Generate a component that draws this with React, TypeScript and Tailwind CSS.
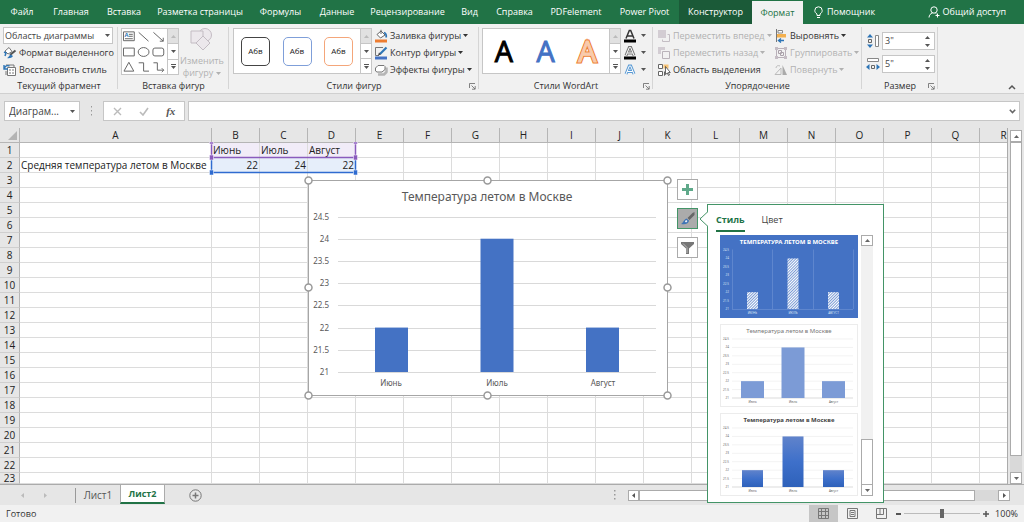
import React, { useState } from "react";
import clsx from "clsx";

const TABS = [
  { label: "Файл", width: "w-[44px]" },
  { label: "Главная", width: "w-[54px]" },
  { label: "Вставка", width: "w-[52px]" },
  { label: "Разметка страницы", width: "w-[100px]" },
  { label: "Формулы", width: "w-[61px]" },
  { label: "Данные", width: "w-[52px]" },
  { label: "Рецензирование", width: "w-[89px]" },
  { label: "Вид", width: "w-[35px]" },
  { label: "Справка", width: "w-[55px]" },
  { label: "PDFelement", width: "w-[68px]" },
  { label: "Power Pivot", width: "w-[69px]" },
];

const COLUMNS = "BCDEFGHIJKLMNOPQR".split("");
const ROWS = Array.from({ length: 23 }, (_, i) => i + 1);

const CELLS: Record<string, string> = {
  A2: "Средняя температура летом в Москве",
  B1: "Июнь",
  C1: "Июль",
  D1: "Август",
  B2: "22",
  C2: "24",
  D2: "22",
};

const DATA = [
  { month: "Июнь", value: 22 },
  { month: "Июль", value: 24 },
  { month: "Август", value: 22 },
];
const TICKS = [24.5, 24, 23.5, 23, 22.5, 22, 21.5, 21];

const Caret = ({ className = "" }: { className?: string }) => (
  <svg className={clsx("shrink-0", className)} width="5" height="3" viewBox="0 0 5 3" fill="currentColor">
    <path d="M0 0h5L2.500 3z" />
  </svg>
);

const Launcher = ({ label }: { label: string }) => (
  <button aria-label={label} className="absolute right-[3px] bottom-[3px] text-[#666]">
    <svg width="7" height="7" viewBox="0 0 7 7" fill="none" stroke="currentColor" strokeWidth="0.8">
      <path d="M0.500 5V0.500H6M2.500 2.500l3.500 3.500M6.200 3v3.200H3" />
    </svg>
  </button>
);

interface GroupProps {
  title: string;
  width: string;
  launcher?: boolean;
  children: React.ReactNode;
}

const Group = ({ title, width, launcher, children }: GroupProps) => (
  <section className={clsx("relative flex shrink-0 flex-col pt-[3px]", width)}>
    <div className="flex h-[52px] shrink-0">{children}</div>
    <h2 className="shrink-0 text-center text-[9px] leading-[14px] text-[#333]">{title}</h2>
    {launcher && <Launcher label={title} />}
    <span className="absolute top-[3px] right-0 h-[62px] w-px bg-[#d5d5d5]" />
  </section>
);

const GalleryScroll = () => (
  <div className="flex w-[11px] flex-col border-l border-[#c6c6c6] text-[#555]">
    <button aria-label="Вверх" className="flex flex-1 items-center justify-center bg-[#e1e1e1] text-[#bbb]">
      <Caret className="rotate-180" />
    </button>
    <button aria-label="Вниз" className="flex flex-1 items-center justify-center border-y border-[#c6c6c6]">
      <Caret />
    </button>
    <button aria-label="Ещё" className="flex flex-1 flex-col items-center justify-center gap-px">
      <span className="h-px w-[5px] bg-current" />
      <Caret />
    </button>
  </div>
);

interface CommandProps {
  label: string;
  icon: React.ReactNode;
  caret?: boolean;
  disabled?: boolean;
}

const Command = ({ label, icon, caret, disabled }: CommandProps) => (
  <button
    disabled={disabled}
    className={clsx(
      "flex h-[17px] items-center gap-[2px] text-[9px] whitespace-nowrap",
      disabled ? "text-[#b1b1b1]" : "text-[#333]"
    )}
  >
    <svg width="14" height="14" viewBox="0 0 14 14" fill="none" className="shrink-0">
      {icon}
    </svg>
    {label}
    {caret && <Caret />}
  </button>
);

/* Ribbon icons, all on a 14x14 grid */
const ICONS = {
  formatSelection: (
    <>
      <path d="M2 5l4-3.500 3 4L5 8z" fill="#fff" stroke="#777" />
      <path d="M1 6l2 1-1 3" stroke="#2e75b6" strokeWidth="1.500" />
      <path d="M12.500 4.500L7 9" stroke="#555" strokeWidth="2" />
      <path d="M7.500 8.500L10 10c-1 2-4 2.500-6 2 1.500-.5 2-2.500 3.500-3.500z" fill="#2e75b6" />
    </>
  ),
  reset: (
    <>
      <path d="M4.500 4.500h8v8h-8zM6 7h2M9 7h2M6 10h2M9 10h2" stroke="#777" fill="#fff" />
      <path d="M3 2h8v2M3 8v4" stroke="#777" />
      <path d="M1 2v4h4M1.500 5.500C2 3 4 2 6.500 3" stroke="#2e75b6" strokeWidth="1.400" />
    </>
  ),
  fill: (
    <>
      <path d="M3 5.500L7 2l4 4-4.500 3z" fill="#fff" stroke="#666" />
      <path d="M7 5V.8" stroke="#666" />
      <path d="M10 3.500c2 .5 2.500 2 2.200 5" stroke="#2e75b6" strokeWidth="1.800" />
      <path d="M1 10.500h12v3H1z" fill="#ed7d31" />
    </>
  ),
  outline: (
    <>
      <path d="M9 1.500H1.500v8H5" stroke="#777" />
      <path d="M12.500 1.500L6 8" stroke="#2e75b6" strokeWidth="2.200" />
      <path d="M4 9.500l1-3 2 2z" fill="#444" />
      <path d="M1 10.500h12v3H1z" fill="#4472c4" />
    </>
  ),
  effects: (
    <>
      <path d="M4 11.500h6l2.500-2.500V4.500" stroke="#b5b5b5" strokeWidth="2.500" strokeLinejoin="round" />
      <path d="M4 2.500h6l1 1v3L8 9H3L1.500 8V5z" fill="#fff" stroke="#777" />
    </>
  ),
  forward: (
    <>
      <path d="M1 1h8v8H1z" fill="#d3cdd3" />
      <path d="M10.500 5.500h2v7h-7v-2" stroke="#c4bec4" />
    </>
  ),
  backward: (
    <>
      <path d="M1 1h7v3H4v4H1z" fill="#d3cdd3" />
      <path d="M5.500 5.500h7v7h-7z" stroke="#b9b3b9" fill="#f1f1f1" />
    </>
  ),
  selection: (
    <>
      <path d="M1.500 1.500h4v4h-4zM1.500 8.500h4v4h-4zM8 12.500H7.500v-4" stroke="#666" fill="#fff" />
      <path d="M6.500 1.500h5v4h-5z" fill="#f7c477" />
      <path d="M8.500 3.500v8l1.800-1.500 1.200 2.500 1-.5-1.200-2.500h2z" fill="#fff" stroke="#444" strokeWidth="0.800" />
    </>
  ),
  align: (
    <>
      <path d="M2.500 0v13" stroke="#777" />
      <path d="M4 1.500h4.500v2.500H4z" fill="#fff" stroke="#888" />
      <path d="M3 5h9v3.500H3z" fill="#f3b04f" />
      <path d="M10 11.500H4.500M7 9.500l-2.500 2 2.500 2" stroke="#2e75b6" strokeWidth="1.400" />
    </>
  ),
  group: (
    <>
      <path d="M2.500 2.500h9v9h-9z" stroke="#b9b0b9" />
      <path d="M1 1h3v3H1zM10 1h3v3h-3zM1 10h3v3H1zM10 10h3v3h-3z" fill="#c4bcc4" />
      <path d="M4.500 4.500h3v3h-3zM6.500 6.500h3v3h-3z" stroke="#aaa1aa" />
    </>
  ),
  rotate: (
    <>
      <path d="M1 11.500h6V5z" stroke="#bbb" />
      <path d="M8.500 2v10H13z" fill="#aaa" />
      <path d="M2 5c0-2 2-3 4-2" stroke="#bbb" />
    </>
  ),
};

const SHAPE_STYLES = ["border-[#444]", "border-[#7f9fd9]", "border-[#f4a67a]"];

const TextEffect = ({ label, color, outline, bar }: { label: string; color: string; outline?: boolean; bar?: boolean }) => (
  <button aria-label={label} className="flex h-[17px] items-center gap-[4px] text-[#555]">
    <svg width="14" height="14" viewBox="0 0 14 14">
      <path
        d="M3 9.500L6.300 1.500h1.400L11 9.500M4.200 7h5.600"
        fill="none"
        stroke={color}
        strokeWidth={outline ? 3 : 1.5}
        transform={bar ? undefined : "translate(0 1.500)"}
      />
      {outline && (
        <path
          d="M3 9.500L6.300 1.500h1.400L11 9.500M4.200 7h5.600"
          fill="none"
          stroke="#fff"
          transform={bar ? undefined : "translate(0 1.500)"}
        />
      )}
      {bar && <path d="M1 10.500h12v3H1z" fill="#000" />}
    </svg>
    <Caret />
  </button>
);

const SizeField = ({ id, label, value, icon }: { id: string; label: string; value: string; icon: React.ReactNode }) => (
  <div className="flex h-[18px] items-center gap-[2px]">
    <label htmlFor={id} aria-label={label}>
      <svg width="14" height="14" viewBox="0 0 14 14" fill="none">
        {icon}
      </svg>
    </label>
    <div className="flex h-[18px] w-[53px] items-center border border-[#c6c6c6] bg-white pr-1">
      <input id={id} defaultValue={value} className="w-full min-w-0 px-[2px] text-[9px] text-[#444] outline-none" />
      <div className="flex flex-col gap-[5px] text-[#555]">
        <Caret className="rotate-180" />
        <Caret />
      </div>
    </div>
  </div>
);

const Ribbon = () => (
  <div className="relative flex h-[70px] shrink-0 overflow-hidden border-b border-[#d0d0d0] bg-[#f1f1f1]">
    <Group title="Текущий фрагмент" width="w-[118px]">
      <div className="flex flex-col pl-[3px]">
        <div className="relative flex h-[17px] items-center">
          <select
            aria-label="Элемент диаграммы"
            className="h-[17px] w-[110px] appearance-none border border-[#c6c6c6] bg-white px-px text-[9px] text-[#444]"
          >
            <option>Область диаграммы</option>
          </select>
          <Caret className="pointer-events-none absolute right-[4px] text-[#555]" />
        </div>
        <Command label="Формат выделенного" icon={ICONS.formatSelection} />
        <Command label="Восстановить стиль" icon={ICONS.reset} />
      </div>
    </Group>
    <Group title="Вставка фигур" width="w-[111px]">
      <div className="mt-px ml-[3px] flex h-[47px] w-[58px] border border-[#c6c6c6] bg-white">
        <svg width="46" height="45" viewBox="0 0 46 45" fill="none" stroke="#666">
          <path d="M1.500 2.500h11v9h-11zM7 5h4M7 7h4M3 9.500h8" />
          <text x="2.500" y="8" fontSize="6" fontWeight="bold" fill="#2e75b6" stroke="none">A</text>
          <path d="M17 3l10 9M32 3l10 9M38.500 12H42V8.500" />
          <path d="M1.500 19h11v8h-11z" />
          <ellipse cx="22" cy="23" rx="5.500" ry="4.500" />
          <rect x="31.500" y="19" width="11" height="8" rx="2" />
          <path d="M7 33.500L12 42.500H2zM17 34h5v8.500h5.500M32 34h4v7.500h6.500M40.500 39.500l2 2-2 2" />
        </svg>
        <GalleryScroll />
      </div>
      <button disabled className="flex w-[46px] flex-col items-center text-[9px] leading-3 text-[#b1b1b1]">
        <svg width="26" height="25" viewBox="0 0 26 25" fill="#ece8ec" stroke="#c3bcc3" className="mb-[3px]">
          <circle cx="16" cy="8" r="6.500" />
          <path d="M2 4h12v12H2z" />
          <path d="M14 9l7 7-7 7-7-7z" />
        </svg>
        Изменить
        <span className="flex items-center gap-[3px]">
          фигуру <Caret />
        </span>
      </button>
    </Group>
    <Group title="Стили фигур" width="w-[250px]" launcher>
      <div className="mt-px ml-1 flex h-[46px] w-[139px] border border-[#c6c6c6] bg-white">
        <div className="flex flex-1 items-center justify-between px-[7px]">
          {SHAPE_STYLES.map((border) => (
            <button
              key={border}
              className={clsx("h-[29px] w-[29px] rounded-[5px] border text-[8px] font-medium text-[#222]", border)}
            >
              Абв
            </button>
          ))}
        </div>
        <GalleryScroll />
      </div>
      <div className="ml-[2px] flex flex-col">
        <Command label="Заливка фигуры" icon={ICONS.fill} caret />
        <Command label="Контур фигуры" icon={ICONS.outline} caret />
        <Command label="Эффекты фигуры" icon={ICONS.effects} caret />
      </div>
    </Group>
    <Group title="Стили WordArt" width="w-[174px]" launcher>
      <div className="mt-px ml-[3px] flex h-[46px] w-[139px] border border-[#c6c6c6] bg-white">
        <svg width="127" height="44" viewBox="0 0 127 44" fontFamily="Open Sans, sans-serif" fontSize="29" textAnchor="middle">
          <text x="21" y="33" fill="#000" stroke="#000">A</text>
          <text x="63" y="33" fill="#4472c4" stroke="#4472c4">A</text>
          <text x="105" y="33" fill="#f8cbad" stroke="#ed7d31" strokeWidth="3">A</text>
          <text x="105" y="33" fill="#f8cbad" stroke="#f8cbad">A</text>
        </svg>
        <GalleryScroll />
      </div>
      <div className="ml-[2px] flex flex-col">
        <TextEffect label="Заливка текста" color="#333" bar />
        <TextEffect label="Контур текста" color="#777" outline bar />
        <TextEffect label="Текстовые эффекты" color="#5b9bd5" outline />
      </div>
    </Group>
    <Group title="Упорядочение" width="w-[209px]">
      <div className="ml-1 flex w-[117px] flex-col">
        <Command label="Переместить вперед" icon={ICONS.forward} caret disabled />
        <Command label="Переместить назад" icon={ICONS.backward} caret disabled />
        <Command label="Область выделения" icon={ICONS.selection} />
      </div>
      <div className="flex flex-col">
        <Command label="Выровнять" icon={ICONS.align} caret />
        <Command label="Группировать" icon={ICONS.group} caret disabled />
        <Command label="Повернуть" icon={ICONS.rotate} caret disabled />
      </div>
    </Group>
    <Group title="Размер" width="w-[76px]" launcher>
      <div className="flex flex-col gap-[5px] pt-[5px] pl-1">
        <SizeField
          id="shape-height"
          label="Высота фигуры"
          value={'3"'}
          icon={
            <>
              <path d="M9.500 1.500h3v11h-3z" stroke="#888" fill="#fff" />
              <path d="M2.500 5.500h3v3h-3z" stroke="#666" />
              <path d="M4 0l3 3.500H1zM4 14l3-3.500H1z" fill="#2e75b6" />
            </>
          }
        />
        <SizeField
          id="shape-width"
          label="Ширина фигуры"
          value={'5"'}
          icon={
            <>
              <path d="M1.500 1.500h11v3h-11z" stroke="#888" fill="#fff" />
              <path d="M5.500 8.500h3v3h-3z" stroke="#666" />
              <path d="M0 10l3.500-3v6zM14 10l-3.500-3v6z" fill="#2e75b6" />
            </>
          }
        />
      </div>
    </Group>
    <button aria-label="Свернуть ленту" className="ml-auto self-end px-2 pb-[3px] text-[#555]">
      <svg width="8" height="6" viewBox="0 0 8 6" fill="none" stroke="currentColor" strokeWidth="1.500">
        <path d="M1 5l3-3 3 3" />
      </svg>
    </button>
  </div>
);

const FormulaBar = () => (
  <div className="flex h-[34px] shrink-0 items-center bg-[#e6e6e6] pr-1 pl-1">
    <div className="flex h-5 w-[76px] items-center justify-between border border-[#c6c6c6] bg-white px-1 text-[#555]">
      <input aria-label="Имя" defaultValue="Диаграм..." className="w-[56px] text-[10px] text-[#444] outline-none" />
      <Caret />
    </div>
    <svg width="23" height="10" viewBox="0 0 23 10" fill="#999">
      <path d="M11 0h1v1.500h-1zM11 4h1v1.500h-1zM11 8h1v1.500h-1z" />
    </svg>
    <div className="flex h-5 w-[82px] items-center justify-around border border-[#c6c6c6] bg-white">
      <button aria-label="Отмена" className="text-[#bbb]">
        <svg width="9" height="9" viewBox="0 0 9 9" stroke="currentColor" strokeWidth="1.400">
          <path d="M1 1l7 7M8 1L1 8" />
        </svg>
      </button>
      <button aria-label="Ввод" className="text-[#bbb]">
        <svg width="10" height="9" viewBox="0 0 10 9" fill="none" stroke="currentColor" strokeWidth="1.600">
          <path d="M1 5l3 3 5-7" />
        </svg>
      </button>
      <button aria-label="Вставить функцию" className="font-['Liberation_Serif',serif] text-[11px] font-bold text-[#555] italic">
        fx
      </button>
    </div>
    <div className="ml-[3px] flex h-5 flex-1 items-center border border-[#c6c6c6] bg-white pr-[3px]">
      <input aria-label="Строка формул" className="min-w-0 flex-1 text-[10px] outline-none" />
      <svg width="7" height="5" viewBox="0 0 7 5" fill="none" stroke="#666" strokeWidth="1.600">
        <path d="M.8.8l2.700 2.700L6.200.8" />
      </svg>
    </div>
  </div>
);

const Sheet = () => (
  <table className="w-[1028px] table-fixed border-separate border-spacing-0 bg-white text-[10px] leading-[14px] text-[#222]">
    <colgroup>
      <col className="w-[20px]" />
      <col className="w-[192px]" />
      {COLUMNS.map((col) => (
        <col key={col} className="w-[48px]" />
      ))}
    </colgroup>
    <thead>
      <tr className="h-[15px] bg-[#e6e6e6]">
        <th className="border-r border-b border-[#b5b5b5] p-0">
          <svg width="9" height="9" viewBox="0 0 9 9" className="mr-[2px] ml-auto">
            <path d="M9 0v9H0z" fill="#b4b4b4" />
          </svg>
        </th>
        {["A", ...COLUMNS].map((col) => (
          <th key={col} className="border-r border-b border-[#b5b5b5] p-0 font-normal">
            {col}
          </th>
        ))}
      </tr>
    </thead>
    <tbody>
      {ROWS.map((row) => (
        <tr key={row} className="h-[15px] last:h-[11px] last:leading-[10px]">
          <th className="border-r border-b border-r-[#b5b5b5] border-b-[#cfcfcf] bg-[#e6e6e6] p-0 font-normal">{row}</th>
          {["A", ...COLUMNS].map((col) => (
            <td
              key={col}
              className={clsx(
                "border-r border-b border-[#dcdcdc] px-px py-0 whitespace-nowrap",
                row === 2 && col !== "A" && "text-right",
                row === 1 && "BCD".includes(col) && "bg-[#f1ecf8]",
                row === 2 && "BCD".includes(col) && "bg-[#e6eefa]"
              )}
            >
              {CELLS[`${col}${row}`]}
            </td>
          ))}
        </tr>
      ))}
    </tbody>
  </table>
);

/* Source ranges highlighted while the chart is selected */
const RangeMarks = () => (
  <svg className="absolute top-[14px] left-[208px]" width="152" height="36" viewBox="0 0 152 36" fill="none">
    <path d="M3.500 1v14.500h144V1" stroke="#8a5bbd" strokeWidth="1.500" />
    <path d="M3.500 17v13.500h144V17" stroke="#2f6bd0" strokeWidth="1.500" />
    {[3.5, 147.5].map((x) => (
      <g key={x}>
        <path d={`M${x - 2} 0h4v2h-4zM${x - 2} 13h4v5h-4z`} fill="#8a5bbd" stroke="#fff" strokeWidth="0.500" />
        <path d={`M${x - 2} 28h4v5h-4z`} fill="#2f6bd0" stroke="#fff" strokeWidth="0.500" />
      </g>
    ))}
  </svg>
);

const Chart = () => {
  const y = (v: number) => 192 - ((v - 21) / 3.5) * 155.5;
  return (
    <svg
      className="absolute top-[46px] left-[302px]"
      width="372"
      height="229"
      viewBox="-6 -6 372 229"
      fontFamily="Noto Sans, sans-serif"
      fontSize="8"
      fill="#595959"
    >
      <rect x="0.500" y="0.500" width="359" height="215" fill="#fff" stroke="#a6a6a6" />
      <text x="179" y="21" fontSize="12" textAnchor="middle">Температура летом в Москве</text>
      {TICKS.map((t) => (
        <g key={t}>
          <path d={`M30 ${Math.round(y(t)) + 0.5}H348`} stroke="#d9d9d9" />
          <text x="21" y={y(t) + 3} textAnchor="end">{t}</text>
        </g>
      ))}
      {DATA.map((d, i) => (
        <g key={d.month}>
          <rect x={67 + i * 105.5} y={y(d.value)} width="33" height={192 - y(d.value)} fill="#4472c4" />
          <text x={83 + i * 106} y="206" textAnchor="middle">{d.month}</text>
        </g>
      ))}
      {[0.5, 179.5, 359.5].map((x) =>
        [0.5, 107.5, 215.5].map((cy) =>
          x === 179.5 && cy === 107.5 ? null : (
            <circle key={`${x}-${cy}`} cx={x} cy={cy} r="3.500" fill="#fff" stroke="#999" strokeWidth="1.500" />
          )
        )
      )}
    </svg>
  );
};

type Variant = "hatched" | "light" | "gradient";

const PREVIEWS: { variant: Variant; barWidth: number; fill: string }[] = [
  { variant: "hatched", barWidth: 11, fill: "url(#hatch)" },
  { variant: "light", barWidth: 23, fill: "#7c9bd6" },
  { variant: "gradient", barWidth: 21, fill: "url(#shade)" },
];

const Preview = ({ variant, barWidth, fill }: { variant: Variant; barWidth: number; fill: string }) => {
  const dark = variant === "hatched";
  const y = (v: number) => 74 - ((v - 21) / 3.5) * 59;
  return (
    <svg
      width="138"
      height="83"
      viewBox="0 0 138 83"
      fontFamily="Noto Sans, sans-serif"
      fontSize="3"
      fill={dark ? "#dbe4f4" : "#666"}
    >
      <defs>
        <pattern id="hatch" width="2" height="2" patternUnits="userSpaceOnUse" patternTransform="rotate(45)">
          <rect width="2" height="2" fill="#fff" />
          <rect width="0.700" height="2" fill="#4472c4" />
        </pattern>
        <linearGradient id="shade" x1="0" y1="0" x2="0" y2="1">
          <stop offset="0" stopColor="#6083cb" />
          <stop offset="0.500" stopColor="#3e70ca" />
          <stop offset="1" stopColor="#2e61ba" />
        </linearGradient>
      </defs>
      <rect x="0.500" y="0.500" width="137" height="82" fill={dark ? "#4472c4" : "#fff"} stroke={dark ? "#4472c4" : "#ececec"} />
      <text
        x="69"
        y="9"
        fontSize="6"
        textAnchor="middle"
        fontWeight={variant === "light" ? "normal" : "bold"}
        fill={dark ? "#fff" : variant === "light" ? "#777" : "#444"}
      >
        {dark ? "ТЕМПЕРАТУРА ЛЕТОМ В МОСКВЕ" : "Температура летом в Москве"}
      </text>
      {TICKS.map((t) => (
        <g key={t}>
          {!dark && <path d={`M12 ${y(t)}H133`} stroke={t === 21 ? "#ccc" : "#ededed"} strokeWidth="0.700" />}
          <text x="9" y={y(t) + 1} textAnchor="end">{t}</text>
        </g>
      ))}
      {dark && <path d="M12.500 14.500V74M52.500 14.500V74M93.500 14.500V74M133.500 14.500V74M12 74.500h121" stroke="#6a8fd2" strokeWidth="0.700" />}
      {DATA.map((d, i) => (
        <g key={d.month}>
          <rect x={32.5 + i * 40.5 - barWidth / 2} y={y(d.value)} width={barWidth} height={74 - y(d.value)} fill={fill} />
          <text x={32.5 + i * 40.5} y="79" textAnchor="middle">{dark ? d.month.toUpperCase() : d.month}</text>
        </g>
      ))}
    </svg>
  );
};

const ChartButtons = () => (
  <div className="absolute top-[51px] left-[677px] flex flex-col gap-[8px]">
    <button aria-label="Элементы диаграммы" className="flex size-[21px] items-center justify-center border border-[#ababab] bg-white">
      <svg width="11" height="11" viewBox="0 0 11 11">
        <path d="M4 0h3v4h4v3H7v4H4V7H0V4h4z" fill="#5fa98a" />
      </svg>
    </button>
    <button aria-label="Стили диаграмм" className="flex size-[21px] items-center justify-center border border-[#439467] bg-[#ababab]">
      <svg width="15" height="15" viewBox="0 0 15 15">
        <path d="M14.500 1v3L9.500 9 7.500 7l5-5z" fill="#666" />
        <path d="M6.500 7.500l2.500 2c0 3-3.500 4.500-8 3.500 2.500-1 2.500-4.500 5.500-5.500z" fill="#3f74b5" />
        <path d="M6 9l1.500 1-1.500 1.500L5 10.500z" fill="#fff" />
      </svg>
    </button>
    <button aria-label="Фильтры диаграммы" className="flex size-[21px] items-center justify-center border border-[#ababab] bg-white">
      <svg width="15" height="14" viewBox="0 0 15 14">
        <path d="M1 1h13v2L9 7.500V13H6V7.500L1 3z" fill="#777" />
        <path d="M3 2.500l4 4V12" fill="none" stroke="#bbb" />
      </svg>
    </button>
  </div>
);

const StylePanel = () => {
  const [tab, setTab] = useState("Стиль");
  return (
    <div className="absolute top-[76px] left-[707px] w-[177px] border border-[#439467] bg-white pb-[6px]">
      <svg className="absolute top-[6px] -left-[9px]" width="9" height="16" viewBox="0 0 9 16">
        <path d="M9 .5L1 8l8 7.500" fill="#fff" stroke="#439467" />
      </svg>
      <div className="flex h-[27px] items-end px-[8px] text-[9px] leading-[14px]">
        {["Стиль", "Цвет"].map((name) => (
          <button
            key={name}
            onClick={() => setTab(name)}
            className={clsx(
              "h-[22px] border-b-2",
              tab === name ? "border-[#217346] font-bold text-[#217346]" : "border-transparent text-[#444]",
              name === "Цвет" && "ml-[17px]"
            )}
          >
            {name}
          </button>
        ))}
      </div>
      <div className="flex pt-[3px] pl-3">
        <div className="flex flex-col gap-[6px]">
          {PREVIEWS.map((p) => (
            <Preview key={p.variant} {...p} />
          ))}
        </div>
        <div className="ml-[3px] flex w-[12px] flex-col bg-[#f1f1f1] text-[#666]">
          <button aria-label="Вверх" className="flex h-[11px] items-center justify-center border border-[#ababab] bg-white">
            <Caret className="rotate-180" />
          </button>
          <div className="mt-auto h-[46px] border border-[#ababab] bg-white" />
          <button aria-label="Вниз" className="flex h-[11px] items-center justify-center border border-t-0 border-[#ababab] bg-white">
            <Caret />
          </button>
        </div>
      </div>
    </div>
  );
};

const SheetTabs = () => (
  <div className="flex h-[21px] shrink-0 items-center border-t border-[#ababab] bg-[#e6e6e6] pr-[14px]">
    <div className="flex w-[75px] gap-[18px] pl-5 text-[#bbb]">
      <Caret className="rotate-90" />
      <Caret className="-rotate-90" />
    </div>
    <button className="h-[15px] w-[45px] border-l border-[#999] text-[10px] leading-[14px] text-[#555]">Лист1</button>
    <button className="h-[19px] w-[45px] self-start border-x border-b-2 border-x-[#ababab] border-b-[#217346] bg-white text-[9px] font-bold text-[#217346]">
      Лист2
    </button>
    <button aria-label="Новый лист" className="ml-[24px]">
      <svg width="13" height="13" viewBox="0 0 13 13" fill="none" stroke="#777">
        <circle cx="6.500" cy="6.500" r="5.700" />
        <path d="M6.500 3.500v6M3.500 6.500h6" strokeWidth="1.500" />
      </svg>
    </button>
    <div className="ml-auto flex w-[396px] items-center gap-[12px]">
      <svg width="2" height="10" viewBox="0 0 2 10" fill="#999">
        <path d="M0 0h1.500v1.500H0zM0 4h1.500v1.500H0zM0 8h1.500v1.500H0z" />
      </svg>
      <div className="flex h-[11px] flex-1 bg-[#d9d9d9] text-[#555]">
        <button aria-label="Влево" className="flex w-[11px] items-center justify-center border border-[#ababab] bg-white">
          <Caret className="rotate-90" />
        </button>
        <div className="mr-[23px] flex-1 border border-[#ababab] bg-white" />
        <button aria-label="Вправо" className="flex w-[12px] items-center justify-center border border-[#ababab] bg-white">
          <Caret className="-rotate-90" />
        </button>
      </div>
    </div>
  </div>
);

const StatusBar = () => (
  <footer className="flex h-[17px] shrink-0 items-center bg-[#f1f1f1] pr-[6px] pl-[6px] text-[9px] text-[#333]">
    <span>Готово</span>
    <div className="ml-auto flex h-full items-center text-[#777]">
      <button aria-label="Обычный" className="flex h-full w-[29px] items-center justify-center bg-[#c6c6c6]">
        <svg width="11" height="11" viewBox="0 0 11 11" fill="none" stroke="currentColor">
          <path d="M.5.5h10v10H.5zM.5 3.500h10M.5 7.500h10M3.500.5v10M7.500.5v10" />
        </svg>
      </button>
      <button aria-label="Разметка страницы" className="flex h-full w-[29px] items-center justify-center">
        <svg width="11" height="11" viewBox="0 0 11 11" fill="none" stroke="currentColor">
          <path d="M.5.5h10v10H.5zM3 2.500h5v6H3zM4 4.500h3M4 6.500h3" />
        </svg>
      </button>
      <button aria-label="Страничный" className="flex h-full w-[29px] items-center justify-center">
        <svg width="11" height="11" viewBox="0 0 11 11" fill="none" stroke="currentColor">
          <path d="M.5.5h10v10H.5zM.5 6.500h7V.5M4 .5v6" />
        </svg>
      </button>
      <button aria-label="Уменьшить" className="h-[2px] w-[5px] bg-[#555]" />
      <div className="mx-[3px] flex h-full w-[76px] items-center">
        <input
          type="range"
          aria-label="Масштаб"
          min="0"
          max="200"
          defaultValue="100"
          className="h-px w-full appearance-none bg-[#bbb] [&::-webkit-slider-thumb]:h-[9px] [&::-webkit-slider-thumb]:w-[4px] [&::-webkit-slider-thumb]:appearance-none [&::-webkit-slider-thumb]:bg-[#666]"
        />
      </div>
      <button aria-label="Увеличить">
        <svg width="6" height="6" viewBox="0 0 6 6" stroke="#555" strokeWidth="1.500">
          <path d="M0 3h6M3 0v6" />
        </svg>
      </button>
      <span className="ml-[6px] text-[#333]">100%</span>
    </div>
  </footer>
);

export default function App() {
  return (
    <div className="flex h-screen flex-col overflow-hidden bg-[#e6e6e6] font-['Open_Sans','Noto_Sans',sans-serif]">
      <nav className="flex h-6 shrink-0 bg-[#217346] text-[9px] text-white">
        {TABS.map((t) => (
          <button key={t.label} className={clsx("shrink-0 whitespace-nowrap", t.width)}>
            {t.label}
          </button>
        ))}
        <button className="w-[73px] bg-[#1b5a38]">Конструктор</button>
        <button className="w-[51px] border-t border-[#217346] bg-[#f1f1f1] text-[#217346]">Формат</button>
        <button className="flex items-center gap-[4px] pl-[11px]">
          <svg width="9" height="13" viewBox="0 0 9 13" fill="none" stroke="currentColor">
            <path d="M3 9.500V8C1.500 7 .8 6 .8 4.500a3.700 3.700 0 017.400 0C8.200 6 7.500 7 6 8v1.500zM3 11.500h3" />
          </svg>
          Помощник
        </button>
        <button className="ml-auto flex items-center gap-[3px] pr-[18px]">
          <svg width="12" height="12" viewBox="0 0 12 12" fill="none" stroke="currentColor">
            <circle cx="6" cy="4" r="3.200" />
            <path d="M1 11.500C1.200 9 2.500 7.500 4.500 7M7.500 7.200l1 .8M9.500 7.500v4M7.500 9.500h4" />
          </svg>
          Общий доступ
        </button>
      </nav>
      <Ribbon />
      <FormulaBar />
      <main className="relative flex min-h-0 flex-1 flex-col">
        <div className="flex min-h-0 flex-1">
          <div className="min-w-0 flex-1 overflow-hidden border-r border-[#ababab]">
            <Sheet />
          </div>
          <div className="mt-[2px] mr-[2px] ml-[2px] flex w-[12px] flex-col bg-[#d9d9d9] text-[#666]">
            <button aria-label="Вверх" className="flex h-[12px] items-center justify-center border border-[#ababab] bg-white">
              <Caret className="rotate-180" />
            </button>
            <div className="mb-[16px] flex-1 border border-[#ababab] bg-white" />
            <button aria-label="Вниз" className="flex h-[12px] items-center justify-center border border-[#ababab] bg-white">
              <Caret />
            </button>
          </div>
        </div>
        <SheetTabs />
        <RangeMarks />
        <Chart />
        <ChartButtons />
        <StylePanel />
      </main>
      <StatusBar />
    </div>
  );
}
